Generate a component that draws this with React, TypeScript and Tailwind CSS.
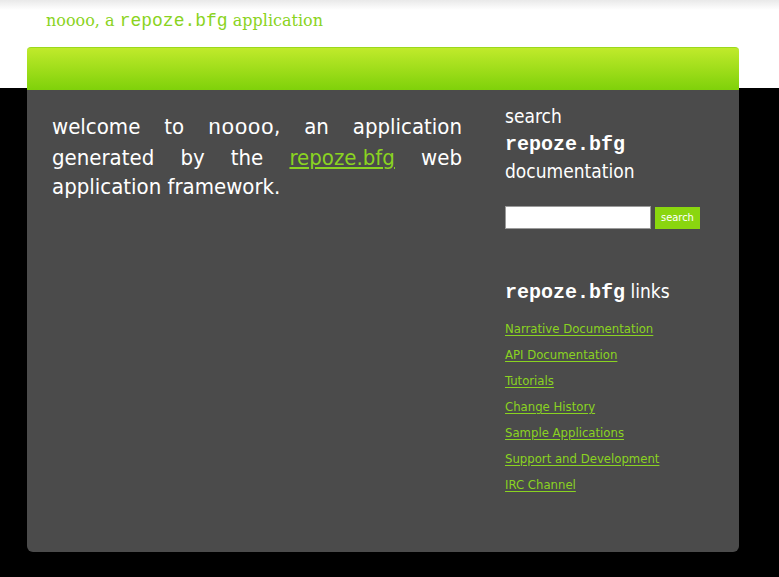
import React from 'react';

const links = [
  'Narrative Documentation',
  'API Documentation',
  'Tutorials',
  'Change History',
  'Sample Applications',
  'Support and Development',
  'IRC Channel',
];

export default function App() {
  return (
    <div className="min-h-[577px] w-full bg-[linear-gradient(to_bottom,#e9e9e9_0px,#ffffff_10px,#ffffff_88px,#000000_88px)] pb-[25px] font-['DejaVu_Sans',Tahoma,sans-serif] font-stretch-condensed">
      <div className="h-[47px] pl-[46px] pt-[11px]">
        <h1 className="font-['DejaVu_Serif',Georgia,serif] font-stretch-normal text-[16px] leading-[20px] text-[#8ad321]">
          noooo, a <span className="font-['Liberation_Mono',monospace] text-[18px]">repoze.bfg</span> application
        </h1>
      </div>

      <div className="mx-[27px] w-[712px]">
        <div className="h-[43px] rounded-t-[4px] border-t border-[#9bd91c] bg-[linear-gradient(to_bottom,#c0ea2b,#7fd10a)] shadow-[0_1px_0_#5fa008]" />

        <div className="grid h-[462px] grid-cols-[410px_1fr] gap-x-[43px] rounded-b-[6px] bg-[#4b4b4b] pl-[25px]">
          <p className="pt-[22px] text-justify text-[22px] leading-[29px] text-white">
            welcome to <span className="font-['Liberation_Mono',monospace] text-[22px]">noooo</span>, an application generated by the{' '}
            <a href="#" className="text-[#8ad321] underline underline-offset-2">repoze.bfg</a> web application framework.
          </p>

          <div className="pt-[13px] text-white">
            <h2 className="text-[19px] leading-[27px]">
              search
              <br />
              <span className="font-['Liberation_Mono',monospace] text-[20px] font-bold">repoze.bfg</span>
              <br />
              documentation
            </h2>

            <form className="mt-[21px] flex items-center gap-[4px]" onSubmit={e => e.preventDefault()}>
              <input type="text" className="h-[23px] w-[146px] border border-[#9a9a9a] bg-white" />
              <button type="submit" className="h-[22px] bg-[#8ad60f] px-[6px] text-[11px] leading-[22px] text-white">
                search
              </button>
            </form>

            <h2 className="mt-[49px] text-[19px] leading-[27px]">
              <span className="font-['Liberation_Mono',monospace] text-[20px] font-bold">repoze.bfg</span> links
            </h2>

            <ul className="mt-[10px] flex flex-col">
              {links.map(link => (
                <li key={link} className="h-[26px] text-[13px] leading-[26px]">
                  <a href="#" className="text-[#8ad321] underline underline-offset-2">{link}</a>
                </li>
              ))}
            </ul>
          </div>
        </div>
      </div>
    </div>
  );
}
